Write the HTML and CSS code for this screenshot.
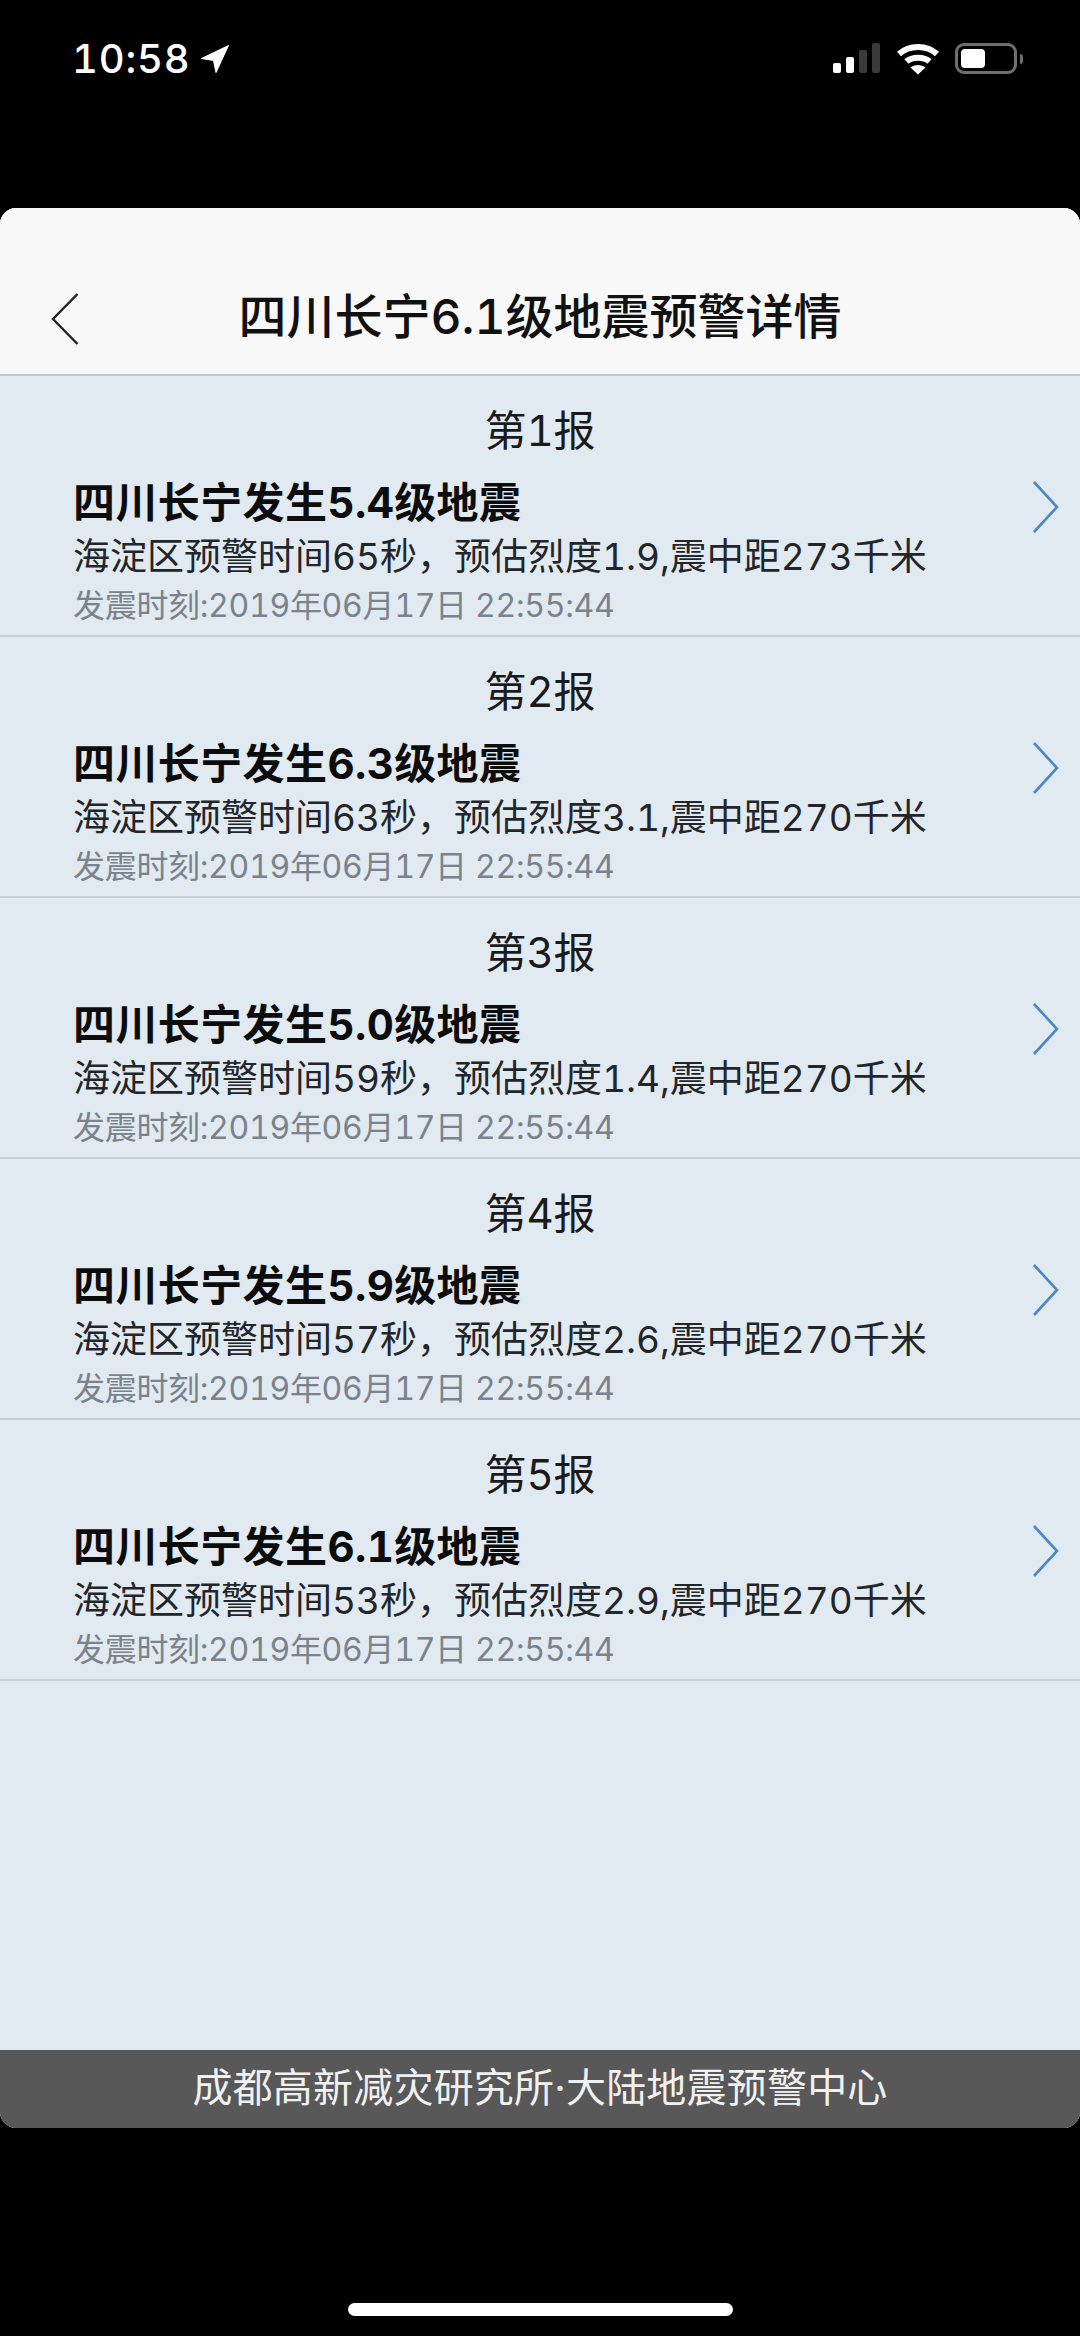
FILE: index.html
```html
<!DOCTYPE html>
<html lang="zh-CN">
<head>
  <meta charset="UTF-8">
  <title>地震预警详情</title>
  <link rel="stylesheet" href="styles.css">
</head>
<body>

  <div class="status-bar">
    <div class="status-left">
      <span class="time">10:58</span>
      <svg class="loc" width="28" height="28" viewBox="0 0 28 28"><path d="M0.5 13.5 L27.5 0.5 L15 27.5 L12.5 15.5 Z" fill="#fff" stroke="#fff" stroke-linejoin="round"/></svg>
    </div>
    <div class="status-right">
      <div class="signal">
        <span class="bar b1"></span>
        <span class="bar b2"></span>
        <span class="bar b3 off"></span>
        <span class="bar b4 off"></span>
      </div>
      <svg class="wifi" width="44" height="32" viewBox="0 0 44 32">
        <path d="M3 11 C13 1.5 31 1.5 41 11" fill="none" stroke="#fff" stroke-width="6"/>
        <path d="M10.5 18.5 C16 13.5 28 13.5 33.5 18.5" fill="none" stroke="#fff" stroke-width="6"/>
        <path d="M22 31.5 L14.5 24.5 C18 21 26 21 29.5 24.5 Z" fill="#fff"/>
      </svg>
      <div class="battery"><span class="battery-fill"></span></div>
      <span class="battery-nub"></span>
    </div>
  </div>

  <div class="card">
    <div class="top-bar">
      <svg class="back" width="28" height="52" viewBox="0 0 28 52"><path d="M26.5 1 L2 26 L26.5 51" fill="none" stroke="#222" stroke-width="2.4"/></svg>
      <h1>四川长宁6.1级地震预警详情</h1>
    </div>

    <div class="list" id="report-list"></div>

    <div class="footer">成都高新减灾研究所·大陆地震预警中心</div>
  </div>

  <div class="home-wrap"><span class="home-bar"></span></div>

  <script>
    const reports = [
      { mag: "5.4", secs: 65, level: "1.9", dist: 273 },
      { mag: "6.3", secs: 63, level: "3.1", dist: 270 },
      { mag: "5.0", secs: 59, level: "1.4", dist: 270 },
      { mag: "5.9", secs: 57, level: "2.6", dist: 270 },
      { mag: "6.1", secs: 53, level: "2.9", dist: 270 }
    ];

    const list = document.getElementById("report-list");

    reports.forEach((r, i) => {
      const row = document.createElement("div");
      row.className = "report";
      row.innerHTML = `
        <div class="report-no">第${i + 1}报</div>
        <div class="report-body">
          <div class="report-text">
            <div class="report-title">四川长宁发生${r.mag}级地震</div>
            <div class="report-info">海淀区预警时间${r.secs}秒，预估烈度${r.level},震中距${r.dist}千米</div>
            <div class="report-time">发震时刻:2019年06月17日 22:55:44</div>
          </div>
          <svg class="chevron" width="28" height="52" viewBox="0 0 28 52"><path d="M3 1 L26 26 L3 51" fill="none" stroke="#4b88c6" stroke-width="2.6"/></svg>
        </div>
      `;
      list.appendChild(row);
    });
  </script>
</body>
</html>
```

FILE: styles.css
```css
* {
  box-sizing: border-box;
}

body {
  margin: 0;
  width: 1080px;
  height: 2336px;
  background-color: #000;
  font-family: Inter, "Noto Sans CJK SC", sans-serif;
  font-variant-numeric: tabular-nums;
  overflow: hidden;
}

/* status bar */
.status-bar {
  height: 208px;
  padding: 43px 57px 0 72px;
  display: flex;
  justify-content: space-between;
  align-items: flex-start;
  color: #fff;
}

.status-left {
  display: flex;
  align-items: center;
  gap: 11px;
  height: 32px;
}

.time {
  font-size: 40px;
  font-weight: 500;
  letter-spacing: 0.8px;
  line-height: 32px;
}

.status-right {
  display: flex;
  align-items: flex-start;
}

.signal {
  display: flex;
  align-items: flex-end;
  gap: 5px;
  height: 30px;
  margin-right: 16px;
}

.bar {
  width: 8px;
  background-color: #fff;
  border-radius: 2px;
}

.bar.off { background-color: #3a3a3a; }
.b1 { height: 10px; }
.b2 { height: 16px; }
.b3 { height: 23px; }
.b4 { height: 30px; }

.wifi {
  margin-right: 15px;
}

.battery {
  width: 62px;
  height: 31px;
  border: 3px solid #6e6e6e;
  border-radius: 9px;
  padding: 3px;
}

.battery-fill {
  display: block;
  width: 24px;
  height: 100%;
  background-color: #fff;
  border-radius: 4px;
}

.battery-nub {
  width: 3px;
  height: 10px;
  margin: 11px 0 0 3px;
  background-color: #6e6e6e;
  border-radius: 0 3px 3px 0;
}

/* main panel */
.card {
  height: 1920px;
  display: flex;
  flex-direction: column;
  background-color: #e1e9f1;
  border-radius: 16px;
  overflow: hidden;
}

.top-bar {
  position: relative;
  height: 168px;
  padding-top: 79px;
  background-color: #f8f8f9;
  border-bottom: 2px solid #c3c7ca;
}

.top-bar h1 {
  margin: 0;
  font-size: 48px;
  font-weight: 500;
  line-height: 60px;
  text-align: center;
  color: #111;
}

.back {
  position: absolute;
  left: 51px;
  top: 85px;
}

.list {
  flex: 1;
}

.report {
  height: 261px;
  padding-top: 27px;
  border-bottom: 2px solid #c6ced7;
}

.report-no {
  font-size: 42px;
  line-height: 56px;
  margin-bottom: 17px;
  text-align: center;
  color: #1a1a1a;
}

.report-body {
  display: flex;
  justify-content: space-between;
  padding: 0 21px 0 73px;
}

.report-title {
  font-size: 42px;
  font-weight: 700;
  letter-spacing: 0.4px;
  line-height: 54px;
  color: #0c0c0c;
}

.report-info {
  font-size: 37px;
  line-height: 54px;
  color: #22262a;
}

.report-time {
  font-size: 32px;
  letter-spacing: -0.3px;
  line-height: 44px;
  color: #7a828b;
}

.chevron {
  margin-top: 5px;
}

.footer {
  height: 78px;
  font-size: 40px;
  letter-spacing: 0.2px;
  line-height: 76px;
  text-align: center;
  color: #f1f1f1;
  background-color: #585858;
}

.home-wrap {
  display: flex;
  justify-content: center;
  padding-top: 175px;
}

.home-bar {
  width: 385px;
  height: 13px;
  background-color: #fff;
  border-radius: 7px;
}
```
